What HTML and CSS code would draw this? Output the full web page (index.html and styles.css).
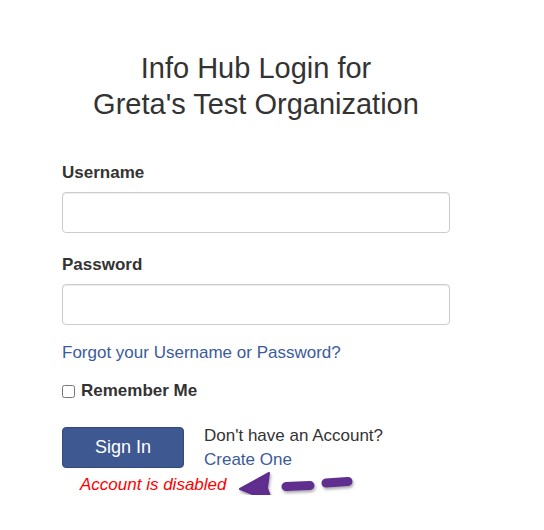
FILE: index.html
```html
<!DOCTYPE html>
<html lang="en">
<head>
    <meta charset="UTF-8">
    <meta name="viewport" content="width=device-width, initial-scale=1.0">
    <title>Info Hub Login</title>
    <link rel="stylesheet" href="styles.css">
</head>
<body>
    <div class="page">
        <h1>Info Hub Login for<br>Greta's Test Organization</h1>

        <form class="login">
            <label class="field-label" for="username">Username</label>
            <input class="input" type="text" id="username">

            <label class="field-label" for="password">Password</label>
            <input class="input" type="password" id="password">

            <a class="link forgot" href="#">Forgot your Username or Password?</a>

            <label class="remember"><input type="checkbox"> Remember Me</label>

            <div class="actions">
                <button type="button" class="button">Sign In</button>
                <div class="signup">
                    <div>Don't have an Account?</div>
                    <a class="link" href="#">Create One</a>
                </div>
            </div>
            <div class="error">
                Account is disabled
                <!-- annotation arrow pointing at the message -->
                <svg class="arrow" width="130" height="44" viewBox="0 0 130 44">
                    <defs>
                        <filter id="sh" x="-20%" y="-40%" width="140%" height="180%">
                            <feDropShadow dx="1" dy="2" stdDeviation="1.5" flood-color="#000" flood-opacity="0.35"/>
                        </filter>
                    </defs>
                    <g filter="url(#sh)" fill="#5f2d8e" stroke="#5f2d8e">
                        <polygon points="4,22 33,6 31,21 36,35" stroke-width="2" stroke-linejoin="round"/>
                        <line x1="50" y1="19.5" x2="74" y2="18.5" stroke-width="9" stroke-linecap="round"/>
                        <line x1="90" y1="16" x2="112" y2="14.5" stroke-width="9" stroke-linecap="round"/>
                    </g>
                </svg>
            </div>
        </form>
    </div>
</body>
</html>
```

FILE: styles.css
```css
body {
    margin: 0;
    font-family: "Liberation Sans", Arial, sans-serif;
    color: #333;
    background: #fff;
}
.page {
    padding: 50px 0 0 62px;
    width: 388px;
}
h1 {
    margin: 0 0 41px;
    font-size: 29px;
    font-weight: normal;
    line-height: 36px;
    text-align: center;
    color: #333;
}
.login {
    display: flex;
    flex-direction: column;
    align-items: flex-start;
}
.field-label {
    font-size: 17px;
    font-weight: bold;
    line-height: 20px;
    margin-bottom: 9px;
}
.input {
    box-sizing: border-box;
    width: 388px;
    height: 41px;
    margin: 0 0 22px;
    border: 1px solid #ccc;
    border-radius: 4px;
    box-shadow: inset 0 1px 1px rgba(0, 0, 0, 0.075);
}
.input:last-of-type {
    margin-bottom: 18px;
}
.link {
    color: #3b5b9b;
    text-decoration: none;
    font-size: 17px;
}
.forgot {
    line-height: 20px;
}
.remember {
    display: flex;
    align-items: center;
    gap: 6px;
    margin-top: 18px;
    font-size: 17px;
    font-weight: bold;
    line-height: 20px;
}
.remember input {
    margin: 0;
    width: 13px;
    height: 13px;
}
.actions {
    display: flex;
    gap: 20px;
    margin-top: 26px;
}
.button {
    width: 122px;
    height: 41px;
    background-color: #3e5891;
    color: #fff;
    border: 1px solid #34497a;
    border-radius: 4px;
    font-family: inherit;
    font-size: 18px;
    cursor: pointer;
}
.signup {
    font-size: 17px;
    line-height: 24px;
    margin-top: -3px;
}
.error {
    position: relative;
    margin: 3px 0 0 18px;
    color: #f00;
    font-style: italic;
    font-size: 17px;
    line-height: 20px;
}
.arrow {
    position: absolute;
    left: 156px;
    top: -8px;
}
```
